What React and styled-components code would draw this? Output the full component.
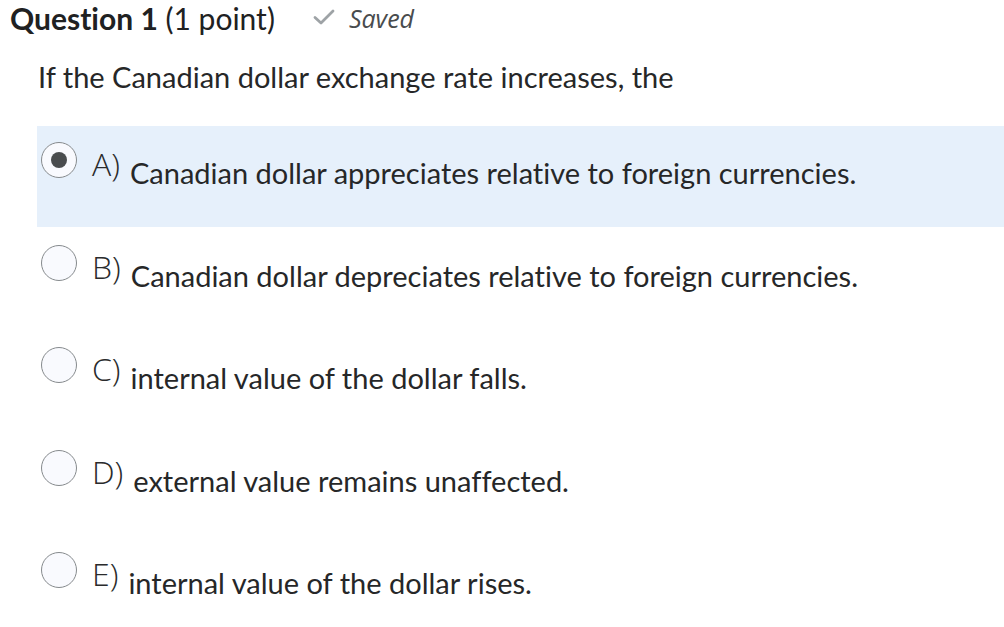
import React from 'react';
import styled, { createGlobalStyle } from 'styled-components';

const GlobalStyle = createGlobalStyle`
  html, body {
    margin: 0;
    padding: 0;
    background: #ffffff;
  }
  body {
    font-family: Lato, "Open Sans", sans-serif;
    font-variant-ligatures: none;
    color: #262728;
  }
`;

const options = [
  { letter: 'A', text: 'Canadian dollar appreciates relative to foreign currencies.', selected: true },
  { letter: 'B', text: 'Canadian dollar depreciates relative to foreign currencies.' },
  { letter: 'C', text: 'internal value of the dollar falls.' },
  { letter: 'D', text: 'external value remains unaffected.' },
  { letter: 'E', text: 'internal value of the dollar rises.' },
];

function CheckIcon() {
  return (
    <svg width="22" height="16" viewBox="0 0 22 16">
      <path d="M2 8.5 L8 14 L20 2" fill="none" stroke="#9ea3a6" strokeWidth="2.8" strokeLinecap="round" strokeLinejoin="round" />
    </svg>
  );
}

export default function App() {
  return (
    <Page>
      <GlobalStyle />
      <Header>
        <Title>
          <b>Question 1</b> (1 point)
        </Title>
        <Status>
          <CheckIcon />
          <span>Saved</span>
        </Status>
      </Header>
      <Prompt>If the Canadian dollar exchange rate increases, the</Prompt>
      <OptionList>
        {options.map((o) => (
          <Option key={o.letter} $selected={o.selected}>
            <Radio $selected={o.selected} />
            <Letter>{o.letter})</Letter>
            <OptionText>{o.text}</OptionText>
          </Option>
        ))}
      </OptionList>
    </Page>
  );
}

const Page = styled.div`
  width: 1004px;
  height: 627px;
  overflow: hidden;
`;

const Header = styled.div`
  display: flex;
  align-items: center;
  gap: 38px;
  padding-left: 10px;
  height: 36px;
`;

const Title = styled.div`
  font-size: 30px;
  line-height: 36px;
  color: #202122;
  b {
    font-weight: 700;
  }
`;

const Status = styled.div`
  display: flex;
  align-items: center;
  gap: 14px;
  color: #494c4e;
  font-size: 25px;
  line-height: 30px;
  font-style: italic;
  font-family: "Open Sans", Lato, sans-serif;
  svg {
    margin-top: -2px;
  }
`;

const Prompt = styled.div`
  margin: 24px 0 0 38px;
  font-size: 29px;
  line-height: 34px;
`;

const OptionList = styled.div`
  margin: 32px 0 0 37px;
  display: flex;
  flex-direction: column;
  gap: 1.5px;
`;

const Option = styled.div`
  display: flex;
  align-items: flex-start;
  height: 101px;
  padding-left: 4px;
  background: ${(p) => (p.$selected ? '#e6f0fb' : 'transparent')};
`;

const Radio = styled.span`
  position: relative;
  flex: none;
  width: 34px;
  height: 34px;
  margin-top: 16px;
  border-radius: 50%;
  border: 1px solid #868a8d;
  background: #f9fafe;
  &::after {
    content: '';
    display: ${(p) => (p.$selected ? 'block' : 'none')};
    position: absolute;
    left: 50%;
    top: 50%;
    width: 16px;
    height: 16px;
    margin: -8px 0 0 -8px;
    border-radius: 50%;
    background: #494c4e;
  }
`;

const Letter = styled.span`
  margin: 20px 0 0 15px;
  font-family: "Open Sans", Lato, sans-serif;
  font-weight: 300;
  font-size: 32px;
  line-height: 36px;
  color: #2a2b2c;
`;

const OptionText = styled.span`
  margin: 30px 0 0 10px;
  font-size: 29px;
  line-height: 34px;
`;
